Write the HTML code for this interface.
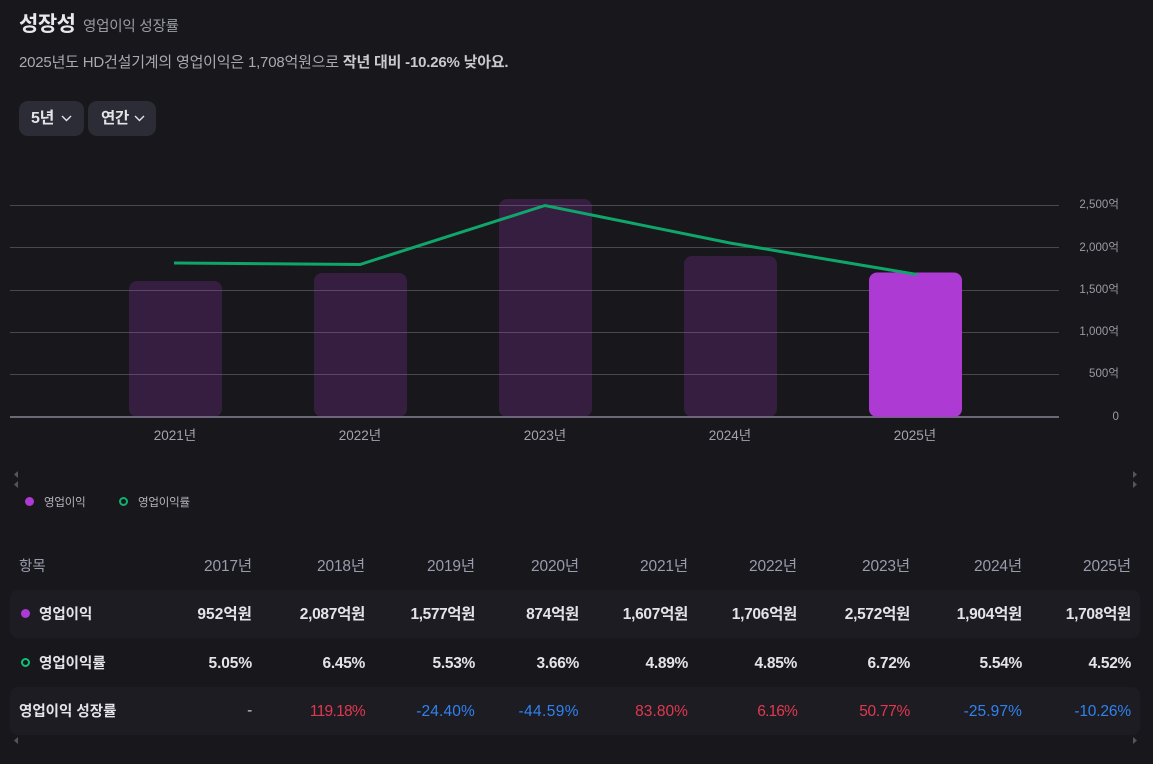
<!DOCTYPE html>
<html lang="ko"><head><meta charset="utf-8"><title>성장성</title>
<style>
html,body{margin:0;padding:0;background:#17171c;}
body{width:1153px;height:764px;position:relative;overflow:hidden;font-family:"Liberation Sans","Noto Sans CJK KR",sans-serif;color:#e4e4e8;}
.t{position:absolute;white-space:nowrap;line-height:20px;}
.r{text-align:right;width:110px;letter-spacing:-.3px;font-size:15.5px;}
.h{color:#9a9cae;font-weight:400;top:557px;letter-spacing:-.15px;}
.b{font-weight:700;color:#e4e4e8;}
.red{color:#e0394f;font-weight:400;top:702px;}
.blue{color:#3182f0;font-weight:400;top:702px;}
.rowbg{position:absolute;left:10px;width:1130px;height:48px;border-radius:8px;background:#1c1c22;}
.btn{position:absolute;top:101px;height:35px;border-radius:9px;background:#2b2c35;}
.ax{position:absolute;font-size:11.500px;color:#9b9ba3;text-align:right;width:60px;left:1059px;line-height:14px;letter-spacing:.05px;}
.xl{position:absolute;font-size:13.500px;color:#a3a3ab;text-align:center;width:80px;top:427px;line-height:18px;}
</style></head><body>
<div class="t" style="left:19px;top:12px;font-size:21px;font-weight:700;line-height:26px;color:#e8e8ec;letter-spacing:-.5px;">성장성</div>
<div class="t" style="left:83px;top:17px;font-size:14.500px;color:#9b9ba3;letter-spacing:-.2px;">영업이익 성장률</div>
<div class="t" style="left:19px;top:53px;font-size:15px;color:#a9a9b0;letter-spacing:-.2px;">2025년도 HD건설기계의 영업이익은 1,708억원으로 <b style="color:#c9c9ce">작년 대비 -10.26% 낮아요.</b></div>

<div class="btn" style="left:19px;width:65px;"></div>
<div class="btn" style="left:88px;width:68px;"></div>
<div class="t" style="left:31px;top:109px;font-size:16px;font-weight:700;color:#e4e4e8;letter-spacing:-.3px;">5년</div>
<div class="t" style="left:101px;top:109px;font-size:15.500px;font-weight:700;color:#e4e4e8;letter-spacing:-.3px;">연간</div>
<svg style="position:absolute;left:0;top:100px" width="170" height="36"><path d="M62 16l4.500 4.500 4.500-4.500M135 16l4.500 4.500 4.500-4.500" fill="none" stroke="#e4e4e8" stroke-width="1.400"/></svg>

<svg style="position:absolute;left:0;top:0" width="1153" height="500">
<g stroke="#48484e" stroke-width="1">
<path d="M10 205.500H1059M10 247.500H1059M10 290.500H1059M10 332.500H1059M10 374.500H1059"/>
</g>
<rect x="10" y="416" width="1049" height="2" fill="#6a6a74"/>
<g fill="#ad3bd3" fill-opacity=".2">
<path d="M129 417V289a8 8 0 0 1 8-8h77a8 8 0 0 1 8 8V409a8 8 0 0 1-8 8h-77a8 8 0 0 1-8-8z"/>
<path d="M314 417V281a8 8 0 0 1 8-8h77a8 8 0 0 1 8 8V409a8 8 0 0 1-8 8h-77a8 8 0 0 1-8-8z"/>
<path d="M499 417V207a8 8 0 0 1 8-8h77a8 8 0 0 1 8 8V409a8 8 0 0 1-8 8h-77a8 8 0 0 1-8-8z"/>
<path d="M684 417V264a8 8 0 0 1 8-8h77a8 8 0 0 1 8 8V409a8 8 0 0 1-8 8h-77a8 8 0 0 1-8-8z"/>
</g>
<path d="M869 417V280.500a8 8 0 0 1 8-8h77a8 8 0 0 1 8 8V409a8 8 0 0 1-8 8h-77a8 8 0 0 1-8-8z" fill="#ad3bd3"/>
<path d="M174 263L360 264.500L545 205.500L730 243L917 274.500" fill="none" stroke="#10a56a" stroke-width="3"/>
<g fill="#55555e">
<path d="M18 471l-4 3.500 4 3.500zM18 481l-4 3.500 4 3.500zM1133 471l4 3.500-4 3.500zM1133 481l4 3.500-4 3.500z"/>
</g>
</svg>

<div class="ax" style="top:198px">2,500억</div>
<div class="ax" style="top:241px">2,000억</div>
<div class="ax" style="top:283px">1,500억</div>
<div class="ax" style="top:325px">1,000억</div>
<div class="ax" style="top:367px">500억</div>
<div class="ax" style="top:410px">0</div>

<div class="xl" style="left:135px">2021년</div>
<div class="xl" style="left:320px">2022년</div>
<div class="xl" style="left:505px">2023년</div>
<div class="xl" style="left:690px">2024년</div>
<div class="xl" style="left:875px">2025년</div>

<div style="position:absolute;left:25px;top:497px;width:9px;height:9px;border-radius:50%;background:#ad3bd3"></div>
<div class="t" style="left:44px;top:493px;font-size:11.500px;color:#b4b4ba;letter-spacing:-.2px;">영업이익</div>
<div style="position:absolute;left:119px;top:497px;width:5px;height:5px;border-radius:50%;border:2px solid #0fb070"></div>
<div class="t" style="left:138px;top:493px;font-size:11.500px;color:#b4b4ba;letter-spacing:-.2px;">영업이익률</div>

<div class="t" style="left:19px;top:557px;font-size:14.500px;color:#9a9cae;">항목</div>
<div class="t r h" style="left:142px">2017년</div>
<div class="t r h" style="left:255px">2018년</div>
<div class="t r h" style="left:365px">2019년</div>
<div class="t r h" style="left:469px">2020년</div>
<div class="t r h" style="left:578px">2021년</div>
<div class="t r h" style="left:687px">2022년</div>
<div class="t r h" style="left:800px">2023년</div>
<div class="t r h" style="left:912px">2024년</div>
<div class="t r h" style="left:1021px">2025년</div>

<div class="rowbg" style="top:590px"></div>
<div class="rowbg" style="top:687px"></div>

<div style="position:absolute;left:21px;top:609px;width:9px;height:9px;border-radius:50%;background:#ad3bd3"></div>
<div class="t b" style="left:39px;top:605px;font-size:14.500px;">영업이익</div>
<div class="t r b" style="left:142px;top:605px;letter-spacing:.05px">952억원</div>
<div class="t r b" style="left:255px;top:605px">2,087억원</div>
<div class="t r b" style="left:365px;top:605px;letter-spacing:-.4px">1,577억원</div>
<div class="t r b" style="left:469px;top:605px">874억원</div>
<div class="t r b" style="left:578px;top:605px">1,607억원</div>
<div class="t r b" style="left:687px;top:605px">1,706억원</div>
<div class="t r b" style="left:800px;top:605px">2,572억원</div>
<div class="t r b" style="left:912px;top:605px">1,904억원</div>
<div class="t r b" style="left:1021px;top:605px">1,708억원</div>

<div style="position:absolute;left:21px;top:658px;width:5px;height:5px;border-radius:50%;border:2px solid #0fc07a"></div>
<div class="t b" style="left:39px;top:654px;font-size:14.500px;">영업이익률</div>
<div class="t r b" style="left:142px;top:654px;letter-spacing:-.1px">5.05%</div>
<div class="t r b" style="left:255px;top:654px">6.45%</div>
<div class="t r b" style="left:365px;top:654px">5.53%</div>
<div class="t r b" style="left:469px;top:654px">3.66%</div>
<div class="t r b" style="left:578px;top:654px">4.89%</div>
<div class="t r b" style="left:687px;top:654px">4.85%</div>
<div class="t r b" style="left:800px;top:654px">6.72%</div>
<div class="t r b" style="left:912px;top:654px">5.54%</div>
<div class="t r b" style="left:1021px;top:654px">4.52%</div>

<div class="t b" style="left:19px;top:702px;font-size:14.500px;">영업이익 성장률</div>
<div class="t r" style="left:142px;top:701px;color:#c9c9ce">-</div>
<div class="t r red" style="left:255px;letter-spacing:-.7px">119.18%</div>
<div class="t r blue" style="left:365px;letter-spacing:.15px">-24.40%</div>
<div class="t r blue" style="left:469px;letter-spacing:.4px">-44.59%</div>
<div class="t r red" style="left:578px;letter-spacing:.05px">83.80%</div>
<div class="t r red" style="left:687px;letter-spacing:-.85px">6.16%</div>
<div class="t r red" style="left:800px">50.77%</div>
<div class="t r blue" style="left:912px;letter-spacing:.1px">-25.97%</div>
<div class="t r blue" style="left:1021px;letter-spacing:-.15px">-10.26%</div>

<svg style="position:absolute;left:0;top:730px" width="1153" height="20"><path d="M18 7l-4 3.500 4 3.500zM1133 7l4 3.500-4 3.500z" fill="#55555e"/></svg>
</body></html>
